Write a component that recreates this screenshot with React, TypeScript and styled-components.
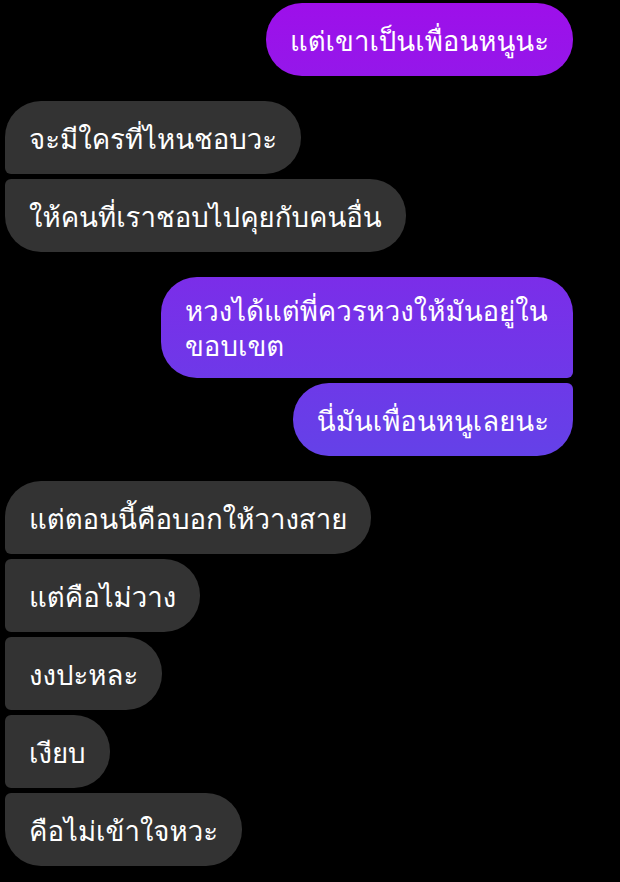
import React from "react";
import styled, { createGlobalStyle, css } from "styled-components";

const Global = createGlobalStyle`
  html, body { margin: 0; padding: 0; background: #000; }
  body { font-family: "Loma", "Noto Sans Thai Looped", "Noto Sans Thai", "DejaVu Sans", sans-serif; }
`;

type Side = "in" | "out";
type Pos = "single" | "first" | "middle" | "last";

const Page = styled.div`
  width: 620px;
  height: 882px;
  box-sizing: border-box;
  padding: 3px 47px 0 5px;
  background: #000;
  overflow: hidden;
`;

const Thread = styled.div`
  display: flex;
  flex-direction: column;
  gap: 25px;
`;

const Group = styled.div<{ $side: Side }>`
  display: flex;
  flex-direction: column;
  gap: 5px;
  align-items: ${(p) => (p.$side === "out" ? "flex-end" : "flex-start")};
`;

const BIG = 36;
const SMALL = 6;

const radius = (side: Side, pos: Pos) => {
  const top = pos === "single" || pos === "first" ? BIG : SMALL;
  const bottom = pos === "single" || pos === "last" ? BIG : SMALL;
  if (side === "out") return `${BIG}px ${top}px ${bottom}px ${BIG}px`;
  return `${top}px ${BIG}px ${BIG}px ${bottom}px`;
};

const Bubble = styled.div<{ $side: Side; $pos: Pos }>`
  box-sizing: border-box;
  display: flex;
  flex-direction: column;
  justify-content: center;
  min-height: 73px;
  max-width: 412px;
  padding: 17px 24px 14px 24px;
  font-size: 27.6px;
  line-height: 35px;
  color: #fff;
  border-radius: ${(p) => radius(p.$side, p.$pos)};
  ${(p) =>
    p.$side === "out"
      ? css`
          background: linear-gradient(to bottom, rgb(158, 15, 234) 0px, rgb(46, 112, 230) 882px);
          background-attachment: fixed;
        `
      : css`
          background: #333333;
        `}
`;

type Msg = { side: Side; texts: string[] };

const messages: Msg[] = [
  { side: "out", texts: ["แต่เขาเป็นเพื่อนหนูนะ"] },
  { side: "in", texts: ["จะมีใครที่ไหนชอบวะ", "ให้คนที่เราชอบไปคุยกับคนอื่น"] },
  { side: "out", texts: ["หวงได้แต่พี่ควรหวงให้มันอยู่ในขอบเขต", "นี่มันเพื่อนหนูเลยนะ"] },
  {
    side: "in",
    texts: ["แต่ตอนนี้คือบอกให้วางสาย", "แต่คือไม่วาง", "งงปะหละ", "เงียบ", "คือไม่เข้าใจหวะ"],
  },
];

const posOf = (i: number, n: number): Pos =>
  n === 1 ? "single" : i === 0 ? "first" : i === n - 1 ? "last" : "middle";

export default function App() {
  return (
    <>
      <Global />
      <Page>
        <Thread>
          {messages.map((m, gi) => (
            <Group key={gi} $side={m.side}>
              {m.texts.map((t, i) => (
                <Bubble key={i} $side={m.side} $pos={posOf(i, m.texts.length)}>
                  {t}
                </Bubble>
              ))}
            </Group>
          ))}
        </Thread>
      </Page>
    </>
  );
}
